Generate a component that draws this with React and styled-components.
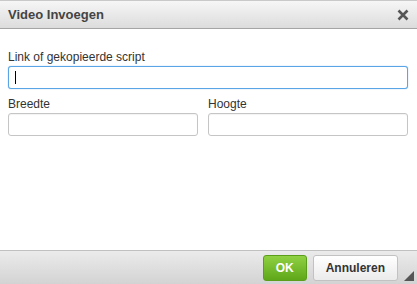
import React from "react";
import styled, { createGlobalStyle } from "styled-components";

const Global = createGlobalStyle`
  html, body {
    margin: 0;
    padding: 0;
    background: #ffffff;
  }
  body {
    font-family: "Liberation Sans", Arial, sans-serif;
  }
`;

const Dialog = styled.div`
  width: 417px;
  height: 284px;
  display: flex;
  flex-direction: column;
  background: #ffffff;
  box-sizing: border-box;
  border-top: 1px solid #c9c9c9;
`;

const Header = styled.div`
  height: 27px;
  display: flex;
  align-items: center;
  justify-content: space-between;
  padding: 0 7px 0 8px;
  background: linear-gradient(to bottom, #f6f6f6, #dcdcdc);
  border-bottom: 1px solid #a5a5a5;
`;

const Title = styled.div`
  font-size: 13px;
  font-weight: bold;
  color: #444444;
`;

const Close = styled.button`
  border: 0;
  background: none;
  padding: 0;
  width: 14px;
  height: 14px;
  display: flex;
  align-items: center;
  justify-content: center;
  cursor: pointer;
`;

const Body = styled.div`
  flex: 1;
  padding: 21px 9px 0 8px;
  display: flex;
  flex-direction: column;
  align-items: flex-start;
`;

const Field = styled.label`
  display: flex;
  flex-direction: column;
  width: ${(p) => p.$w}px;
  font-size: 12px;
  color: #333333;
`;

const LabelText = styled.span`
  line-height: 14px;
  margin-bottom: 2px;
`;

const InputWrap = styled.div`
  position: relative;
`;

const Input = styled.input`
  display: block;
  box-sizing: border-box;
  height: 23px;
  width: 100%;
  border: 1px solid ${(p) => (p.$focus ? "#59a5e5" : "#c5c5c5")};
  border-radius: 3px;
  box-shadow: ${(p) => (p.$focus ? "0 0 1px #59a5e5" : "inset 0 1px 1px rgba(0,0,0,0.05)")};
  padding: 0 6px;
  font-family: inherit;
  font-size: 12px;
  outline: none;
  background: #ffffff;
`;

const Caret = styled.span`
  position: absolute;
  left: 7px;
  top: 5px;
  width: 1px;
  height: 13px;
  background: #000000;
  pointer-events: none;
`;

const Row = styled.div`
  display: flex;
  gap: 10px;
  margin-top: 8px;
`;

const Footer = styled.div`
  height: 33px;
  border-top: 1px solid #c0c0c0;
  background: linear-gradient(to bottom, #ebebeb, #d3d3d3);
  display: flex;
  align-items: center;
  justify-content: flex-end;
  gap: 6px;
  padding: 0 19px 0 0;
  position: relative;
`;

const Button = styled.button`
  box-sizing: border-box;
  height: 26px;
  padding: 0 12px;
  border-radius: 3px;
  font-family: inherit;
  font-size: 12px;
  font-weight: bold;
  cursor: pointer;
  color: ${(p) => (p.$primary ? "#ffffff" : "#333333")};
  border: 1px solid ${(p) => (p.$primary ? "#5a9e1c" : "#c2c2c2")};
  background: ${(p) =>
    p.$primary
      ? "linear-gradient(to bottom, #8fd143, #5fa71a)"
      : "linear-gradient(to bottom, #ffffff, #ebebeb)"};
  min-width: ${(p) => (p.$primary ? 43 : 85)}px;
`;

const Grip = styled.div`
  position: absolute;
  right: 3px;
  bottom: 3px;
  width: 0;
  height: 0;
  border-style: solid;
  border-width: 0 0 10px 10px;
  border-color: transparent transparent #555555 transparent;
`;

export default function App() {
  return (
    <>
      <Global />
      <Dialog>
        <Header>
          <Title>Video Invoegen</Title>
          <Close aria-label="Sluiten">
            <svg width="12" height="12" viewBox="0 0 12 12">
              <path d="M1.5 1.5 L10.5 10.5 M10.5 1.5 L1.5 10.5" stroke="#555" strokeWidth="2.6" />
            </svg>
          </Close>
        </Header>
        <Body>
          <Field $w={400}>
            <LabelText>Link of gekopieerde script</LabelText>
            <InputWrap>
              <Input $focus />
              <Caret />
            </InputWrap>
          </Field>
          <Row>
            <Field $w={190}>
              <LabelText>Breedte</LabelText>
              <Input />
            </Field>
            <Field $w={200}>
              <LabelText>Hoogte</LabelText>
              <Input />
            </Field>
          </Row>
        </Body>
        <Footer>
          <Button $primary>OK</Button>
          <Button>Annuleren</Button>
          <Grip />
        </Footer>
      </Dialog>
    </>
  );
}
